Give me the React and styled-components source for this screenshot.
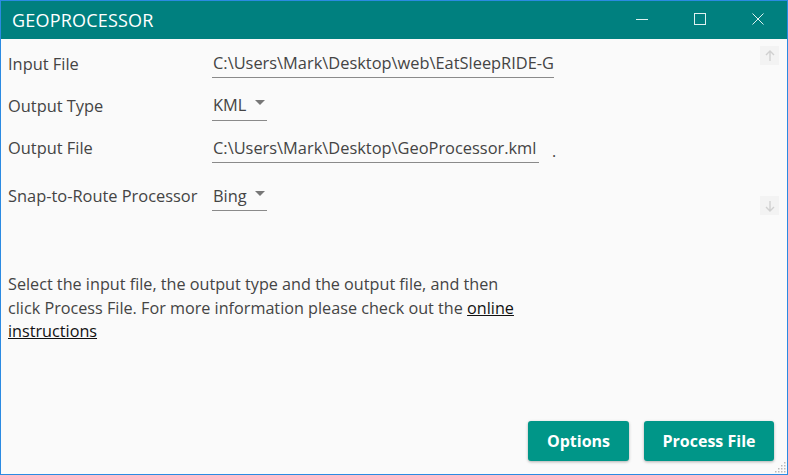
import React from "react";
import styled, { createGlobalStyle } from "styled-components";

const GlobalStyle = createGlobalStyle`
  html, body {
    margin: 0;
    padding: 0;
    background: #fafafa;
  }
  * {
    box-sizing: border-box;
  }
`;

const fields = [
  { label: "Input File", kind: "text", value: "C:\\Users\\Mark\\Desktop\\web\\EatSleepRIDE-GPX.gpx", width: 342 },
  { label: "Output Type", kind: "select", value: "KML" },
  { label: "Output File", kind: "text", value: "C:\\Users\\Mark\\Desktop\\GeoProcessor.kml", width: 327, trailing: "." },
  { label: "Snap-to-Route Processor", kind: "select", value: "Bing", gap: true },
];

const App = () => {
  return (
    <>
      <GlobalStyle />
      <Window>
        <TitleBar>
          <Title>GEOPROCESSOR</Title>
          <Controls>
            <CaptionButton>
              <svg width="12" height="12" viewBox="0 0 12 12">
                <line x1="0" y1="6.5" x2="12" y2="6.5" stroke="#dff1f0" strokeWidth="1" />
              </svg>
            </CaptionButton>
            <CaptionButton>
              <svg width="12" height="12" viewBox="0 0 12 12">
                <rect x="0.5" y="0.5" width="11" height="11" fill="none" stroke="#dff1f0" strokeWidth="1" />
              </svg>
            </CaptionButton>
            <CaptionButton>
              <svg width="12" height="12" viewBox="0 0 12 12">
                <path d="M0.5 0.5 L11.5 11.5 M11.5 0.5 L0.5 11.5" stroke="#dff1f0" strokeWidth="1" />
              </svg>
            </CaptionButton>
          </Controls>
        </TitleBar>

        <Body>
          <FormArea>
            <Form>
              {fields.map((f) => (
                <Row key={f.label} gap={f.gap}>
                  <Label>{f.label}</Label>
                  <FieldCell>
                    {f.kind === "text" ? (
                      <TextField style={{ width: f.width }}>{f.value}</TextField>
                    ) : (
                      <Select>
                        <span>{f.value}</span>
                        <Caret />
                      </Select>
                    )}
                    {f.trailing && <Trailing>{f.trailing}</Trailing>}
                  </FieldCell>
                </Row>
              ))}
            </Form>
            <ScrollBar>
              <ScrollArrow>
                <svg width="10" height="12" viewBox="0 0 10 12">
                  <path d="M5 1 V11 M1 5 L5 1 L9 5" stroke="#d0d0d0" strokeWidth="1.4" fill="none" />
                </svg>
              </ScrollArrow>
              <ScrollArrow>
                <svg width="10" height="12" viewBox="0 0 10 12">
                  <path d="M5 1 V11 M1 7 L5 11 L9 7" stroke="#d0d0d0" strokeWidth="1.4" fill="none" />
                </svg>
              </ScrollArrow>
            </ScrollBar>
          </FormArea>

          <Description>
            Select the input file, the output type and the output file, and then
            click Process File. For more information please check out the{" "}
            <Link href="#">online instructions</Link>
          </Description>

          <Footer>
            <Button width={101}>Options</Button>
            <Button width={130}>Process File</Button>
          </Footer>

          <Grip>
            <svg width="12" height="12" viewBox="0 0 12 12">
              {[
                [10, 2], [10, 5], [7, 5], [10, 8], [7, 8], [4, 8],
                [10, 11], [7, 11], [4, 11], [1, 11],
              ].map(([x, y]) => (
                <rect key={x + "-" + y} x={x} y={y - 1} width="1.5" height="1.5" fill="#b9b9b9" />
              ))}
            </svg>
          </Grip>
        </Body>
      </Window>
    </>
  );
};

export default App;

const Window = styled.div`
  width: 788px;
  height: 475px;
  display: flex;
  flex-direction: column;
  border: 1px solid #2b8ae2;
  background: #fafafa;
  font-family: "Segoe UI", "Open Sans", sans-serif;
  color: #444;
`;

const TitleBar = styled.div`
  height: 38px;
  flex-shrink: 0;
  display: flex;
  align-items: center;
  justify-content: space-between;
  background: #00807f;
  color: #fff;
`;

const Title = styled.div`
  padding-left: 11px;
  font-size: 18px;
  letter-spacing: 0.2px;
`;

const Controls = styled.div`
  display: flex;
  height: 100%;
`;

const CaptionButton = styled.div`
  width: 58px;
  height: 100%;
  display: flex;
  align-items: center;
  justify-content: center;
  padding-bottom: 2px;
`;

const Body = styled.div`
  flex: 1;
  position: relative;
  display: flex;
  flex-direction: column;
`;

const FormArea = styled.div`
  display: flex;
  height: 182px;
`;

const Form = styled.div`
  flex: 1;
  display: flex;
  flex-direction: column;
  padding: 7px 0 0 7px;
`;

const Row = styled.div`
  display: grid;
  grid-template-columns: 204px 1fr;
  align-items: stretch;
  height: 33px;
  margin-bottom: 10px;
  margin-top: ${(props) => (props.gap ? "6px" : "0")};
`;

const Label = styled.div`
  display: flex;
  align-items: center;
  padding-top: 2px;
  font-size: 16.4px;
  white-space: nowrap;
`;

const FieldCell = styled.div`
  display: flex;
  align-items: center;
  height: 100%;
`;

const TextField = styled.div`
  height: 100%;
  display: flex;
  align-items: center;
  padding: 2px 0 0 1px;
  font-size: 16.4px;
  white-space: nowrap;
  overflow: hidden;
  border-bottom: 1px solid #8a8a8a;
`;

const Select = styled.div`
  width: 55px;
  height: 100%;
  display: flex;
  align-items: center;
  justify-content: space-between;
  padding: 2px 2px 0 1px;
  font-size: 16.4px;
  border-bottom: 1px solid #8a8a8a;
`;

const Caret = styled.span`
  width: 0;
  height: 0;
  margin-top: -4px;
  border-left: 5px solid transparent;
  border-right: 5px solid transparent;
  border-top: 5px solid #777;
`;

const Trailing = styled.span`
  margin-left: 13px;
  font-size: 16px;
  padding-top: 8px;
`;

const ScrollBar = styled.div`
  width: 28px;
  display: flex;
  flex-direction: column;
  justify-content: space-between;
  padding: 7px 8px 6px 1px;
`;

const ScrollArrow = styled.div`
  width: 19px;
  height: 19px;
  display: flex;
  align-items: center;
  justify-content: center;
  background: #f3f3f3;
`;

const Description = styled.p`
  margin: 52px 0 0 7px;
  width: 524px;
  font-size: 16.2px;
  line-height: 23.5px;
  color: #444;
`;

const Link = styled.a`
  color: #111;
  text-decoration: underline;
`;

const Footer = styled.div`
  margin-top: auto;
  display: flex;
  justify-content: flex-end;
  gap: 15px;
  padding: 0 13px 13px 0;
`;

const Button = styled.button`
  width: ${(props) => props.width}px;
  height: 40px;
  padding: 0;
  border: none;
  border-radius: 3px;
  background: #009688;
  color: #fff;
  font-family: "Segoe UI", "Open Sans", sans-serif;
  font-weight: 700;
  font-size: 16px;
  box-shadow: 0 1px 3px rgba(0, 0, 0, 0.3);
`;

const Grip = styled.div`
  position: absolute;
  right: 1px;
  bottom: 1px;
  width: 12px;
  height: 12px;
  line-height: 0;
`;
